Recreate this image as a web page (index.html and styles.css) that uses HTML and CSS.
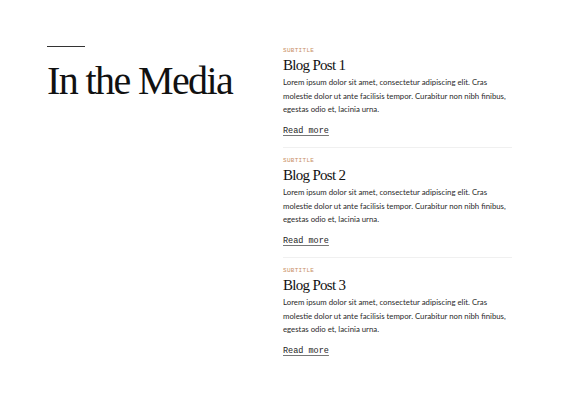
FILE: index.html
```html
<!DOCTYPE html>
<html lang="en">
<head>
<meta charset="utf-8">
<title>In the Media</title>
<link rel="stylesheet" href="styles.css">
</head>
<body>
<main class="page">
  <section class="intro">
    <div class="rule"></div>
    <h1 class="heading">In the Media</h1>
  </section>
  <section class="posts">
    <article class="post">
      <div class="subtitle">Subtitle</div>
      <h2 class="title">Blog Post 1</h2>
      <p class="text">Lorem ipsum dolor sit amet, consectetur adipiscing elit. Cras molestie dolor ut ante facilisis tempor. Curabitur non nibh finibus, egestas odio et, lacinia urna.</p>
      <a class="more" href="#">Read more</a>
    </article>
    <article class="post">
      <div class="subtitle">Subtitle</div>
      <h2 class="title">Blog Post 2</h2>
      <p class="text">Lorem ipsum dolor sit amet, consectetur adipiscing elit. Cras molestie dolor ut ante facilisis tempor. Curabitur non nibh finibus, egestas odio et, lacinia urna.</p>
      <a class="more" href="#">Read more</a>
    </article>
    <article class="post">
      <div class="subtitle">Subtitle</div>
      <h2 class="title">Blog Post 3</h2>
      <p class="text">Lorem ipsum dolor sit amet, consectetur adipiscing elit. Cras molestie dolor ut ante facilisis tempor. Curabitur non nibh finibus, egestas odio et, lacinia urna.</p>
      <a class="more" href="#">Read more</a>
    </article>
  </section>
</main>
</body>
</html>
```
FILE: styles.css
```css
html, body {
  margin: 0;
  padding: 0;
  background: #fff;
}
.page {
  display: flex;
  padding: 45px 0 0 47px;
}
.intro {
  width: 236px;
  flex: none;
}
.rule {
  width: 38px;
  height: 1px;
  margin-top: 1px;
  background: #333;
}
.heading {
  margin: 12px 0 0;
  font-family: "Liberation Serif", "DejaVu Serif", serif;
  font-weight: 400;
  font-size: 40px;
  line-height: 44px;
  color: #111;
  letter-spacing: -1.6px;
}
.posts {
  width: 229px;
  flex: none;
  padding-top: 1.5px;
}
.post {
  padding: 9px 0 10px;
  border-bottom: 1px solid #f0f0f0;
}
.post:first-child {
  padding-top: 0;
}
.post:last-child {
  border-bottom: none;
}
.subtitle {
  font-family: "Liberation Mono", monospace;
  font-size: 6px;
  line-height: 8px;
  text-transform: uppercase;
  letter-spacing: 0.3px;
  color: #c98f66;
}
.title {
  margin: 0;
  font-family: "Liberation Serif", "DejaVu Serif", serif;
  font-weight: 400;
  font-size: 15px;
  line-height: 20px;
  letter-spacing: -0.7px;
  color: #111;
}
.text {
  margin: 1.5px 0 0;
  font-family: Lato, "Open Sans", sans-serif;
  font-size: 7.8px;
  line-height: 13.5px;
  color: #2a2a2a;
}
.more {
  display: inline-block;
  margin-top: 8px;
  font-family: "Liberation Mono", monospace;
  font-size: 8.5px;
  line-height: 12px;
  color: #222;
  text-decoration: underline;
  text-underline-offset: 2px;
  text-decoration-color: #777;
}
```
